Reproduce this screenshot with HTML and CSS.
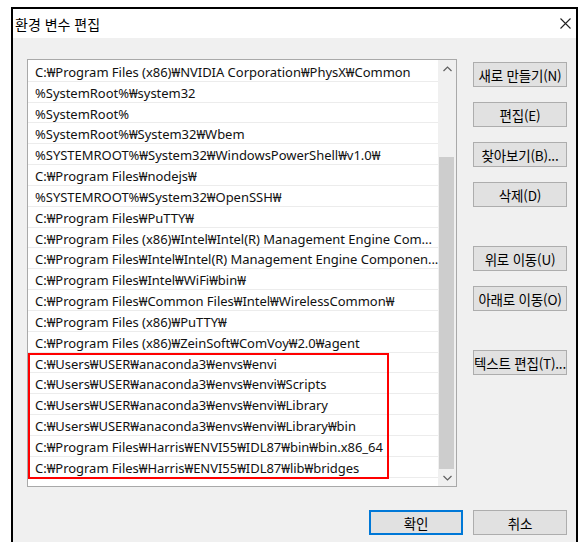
FILE: index.html
```html
<!DOCTYPE html>
<html lang="ko">
<head>
<meta charset="utf-8">
<title>환경 변수 편집</title>
<link rel="stylesheet" href="styles.css">
</head>
<body>
<div class="window">
  <div class="titlebar">
    <span class="title">환경 변수 편집</span>
    <span class="close">
      <svg width="11" height="11" viewBox="0 0 11 11"><path d="M0.5 0.5 L10.5 10.5 M10.5 0.5 L0.5 10.5" stroke="#222" stroke-width="1.1" fill="none"/></svg>
    </span>
  </div>
  <div class="client">
    <div class="main">
      <div class="list">
        <div class="rows">
          <div class="row">C:₩Program Files (x86)₩NVIDIA Corporation₩PhysX₩Common</div>
          <div class="row">%SystemRoot%₩system32</div>
          <div class="row">%SystemRoot%</div>
          <div class="row">%SystemRoot%₩System32₩Wbem</div>
          <div class="row">%SYSTEMROOT%₩System32₩WindowsPowerShell₩v1.0₩</div>
          <div class="row">C:₩Program Files₩nodejs₩</div>
          <div class="row">%SYSTEMROOT%₩System32₩OpenSSH₩</div>
          <div class="row">C:₩Program Files₩PuTTY₩</div>
          <div class="row">C:₩Program Files (x86)₩Intel₩Intel(R) Management Engine Com...</div>
          <div class="row">C:₩Program Files₩Intel₩Intel(R) Management Engine Componen...</div>
          <div class="row">C:₩Program Files₩Intel₩WiFi₩bin₩</div>
          <div class="row">C:₩Program Files₩Common Files₩Intel₩WirelessCommon₩</div>
          <div class="row">C:₩Program Files (x86)₩PuTTY₩</div>
          <div class="row">C:₩Program Files (x86)₩ZeinSoft₩ComVoy₩2.0₩agent</div>
          <div class="row">C:₩Users₩USER₩anaconda3₩envs₩envi</div>
          <div class="row">C:₩Users₩USER₩anaconda3₩envs₩envi₩Scripts</div>
          <div class="row">C:₩Users₩USER₩anaconda3₩envs₩envi₩Library</div>
          <div class="row">C:₩Users₩USER₩anaconda3₩envs₩envi₩Library₩bin</div>
          <div class="row">C:₩Program Files₩Harris₩ENVI55₩IDL87₩bin₩bin.x86_64</div>
          <div class="row">C:₩Program Files₩Harris₩ENVI55₩IDL87₩lib₩bridges</div>
        </div>
        <div class="scrollbar">
          <div class="arrow">
            <svg width="9" height="6" viewBox="0 0 9 6"><path d="M0.5 5 L4.5 1 L8.5 5" stroke="#606060" stroke-width="1.2" fill="none"/></svg>
          </div>
          <div class="track"><div class="thumb"></div></div>
          <div class="arrow">
            <svg width="9" height="6" viewBox="0 0 9 6"><path d="M0.5 1 L4.5 5 L8.5 1" stroke="#606060" stroke-width="1.2" fill="none"/></svg>
          </div>
        </div>
        <div class="highlight"></div>
      </div>
      <div class="side">
        <div class="group">
          <button class="btn">새로 만들기(N)</button>
          <button class="btn">편집(E)</button>
          <button class="btn">찾아보기(B)...</button>
          <button class="btn">삭제(D)</button>
        </div>
        <div class="group">
          <button class="btn">위로 이동(U)</button>
          <button class="btn">아래로 이동(O)</button>
        </div>
        <div class="group">
          <button class="btn">텍스트 편집(T)...</button>
        </div>
      </div>
    </div>
    <div class="footer">
      <button class="btn default">확인</button>
      <button class="btn">취소</button>
    </div>
  </div>
</div>
</body>
</html>
```
FILE: styles.css
```css
* { box-sizing: border-box; }

body {
  margin: 0;
  background: #ffffff;
  font-family: "Noto Sans", "Noto Sans CJK KR", sans-serif;
  overflow: hidden;
}

.window {
  margin: 7px 0 0 11px;
  width: 567px;
  height: 545px;
  border: 2px solid #000;
  border-bottom: none;
  background: #f0f0f0;
}

.titlebar {
  height: 29px;
  background: #fff;
  display: flex;
  align-items: center;
  justify-content: space-between;
  padding: 0 5px 0 2px;
}

.title {
  font-family: "Noto Sans CJK KR", sans-serif;
  font-size: 14px;
  color: #000;
}

.close { display: flex; }

.client {
  padding: 21px 9px 0 14px;
}

.main {
  display: flex;
  gap: 16px;
}

.list {
  position: relative;
  width: 430px;
  height: 428px;
  border: 1px solid #a9a9a9;
  background: #fff;
  display: flex;
}

.rows {
  flex: 1;
  padding-top: 1px;
}

.row {
  height: 20.83px;
  line-height: 22px;
  padding-left: 7px;
  font-size: 13px;
  letter-spacing: -0.03px;
  color: #111;
  white-space: nowrap;
  border-bottom: 1px solid #ececec;
}

.scrollbar {
  width: 19px;
  display: flex;
  flex-direction: column;
  background: #f0f0f0;
}

.arrow {
  height: 17px;
  display: flex;
  align-items: center;
  justify-content: center;
}

.track {
  flex: 1;
  position: relative;
}

.thumb {
  position: absolute;
  left: 1px;
  right: 2px;
  top: 80px;
  bottom: 0;
  background: #cdcdcd;
}

.highlight {
  position: absolute;
  left: 0;
  top: 293px;
  width: 361px;
  height: 126px;
  border: 2px solid #ff0000;
  pointer-events: none;
}

.side {
  width: 94px;
  padding-top: 3px;
  display: flex;
  flex-direction: column;
  gap: 39px;
}

.group {
  display: flex;
  flex-direction: column;
  gap: 15px;
}

.btn {
  width: 94px;
  height: 25px;
  padding: 0;
  background: #e1e1e1;
  border: 1px solid #adadad;
  font-family: "Noto Sans CJK KR", sans-serif;
  font-size: 13.5px;
  letter-spacing: -0.2px;
  white-space: nowrap;
  color: #000;
}

.footer {
  display: flex;
  justify-content: flex-end;
  gap: 10px;
  margin-top: 23px;
}

.btn.default {
  border: 2px solid #0078d7;
}
```
